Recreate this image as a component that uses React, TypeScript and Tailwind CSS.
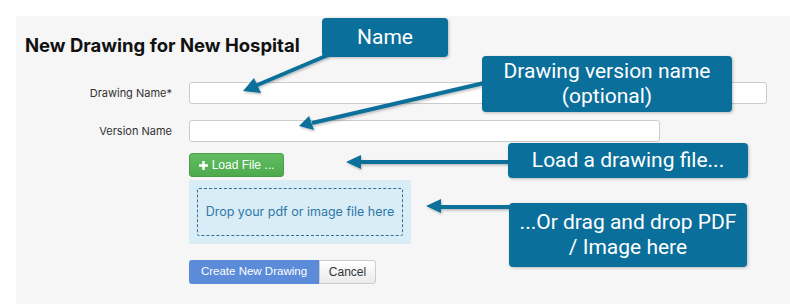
import React from "react";

const Callout = ({ className, children }: { className: string; children: React.ReactNode }) => (
  <div
    className={`absolute flex items-center justify-center rounded-[4px] bg-[#0b6f9b] text-center text-[21px] leading-[25px] text-white shadow-[1px_1px_3px_rgba(0,0,0,0.25)] ${className}`}
    style={{ fontFamily: "Roboto, 'Liberation Sans', sans-serif" }}
  >
    {children}
  </div>
);

export default function App() {
  return (
    <div
      className="relative h-[304px] w-[790px] overflow-hidden bg-white pl-4 pt-4"
      style={{ fontFamily: "Inter, 'Liberation Sans', sans-serif" }}
    >
      <div className="h-full bg-[#f6f6f6] pl-[9px] pt-[18px]">
        <h1 className="text-[18.5px] font-bold leading-[22px] text-[#111]">New Drawing for New Hospital</h1>

        <div className="mt-[26px] flex flex-col">
          <div className="flex items-center gap-[17px]">
            <label className="w-[147px] text-right text-[11px] text-[#333]">Drawing Name*</label>
            <input className="h-[22px] w-[578px] rounded-[3px] border border-[#ccc] bg-white" />
          </div>
          <div className="mt-[16px] flex items-center gap-[17px]">
            <label className="w-[147px] text-right text-[11px] text-[#333]">Version Name</label>
            <input className="h-[22px] w-[471px] rounded-[3px] border border-[#ccc] bg-white" />
          </div>

          <div className="ml-[164px] mt-[11px] flex flex-col items-start">
            <button
              className="flex h-[24px] w-[95px] items-center justify-center gap-[4px] rounded-[3px] border border-[#4a9e4a] bg-gradient-to-b from-[#62bd62] to-[#4caa4c] text-[12px] text-white"
              style={{ fontFamily: "'Liberation Sans', Arial, sans-serif" }}
            >
              <svg width="9" height="9" viewBox="0 0 9 9">
                <path d="M3.3 0h2.4v3.3H9v2.4H5.7V9H3.3V5.7H0V3.3h3.3z" fill="white" />
              </svg>
              Load File ...
            </button>

            <div className="mt-[3px] h-[64px] w-[222px] bg-[#d9edf7] p-[8px]">
              <div className="flex h-full w-full items-center justify-center rounded-[2px] border border-dashed border-[#2f6f99] text-[12.5px] text-[#2f78a8]">
                Drop your pdf or image file here
              </div>
            </div>

            <div className="mt-[16px] flex" style={{ fontFamily: "'Liberation Sans', Arial, sans-serif" }}>
              <button className="h-[24px] w-[130px] rounded-l-[3px] bg-[#5b8bd9] text-[11.5px] text-white">
                Create New Drawing
              </button>
              <button className="h-[24px] w-[57px] rounded-r-[3px] border border-[#ccc] bg-gradient-to-b from-white to-[#ebebeb] text-[12px] text-[#333]">
                Cancel
              </button>
            </div>
          </div>
        </div>
      </div>

      <svg className="pointer-events-none absolute left-0 top-0" width="790" height="304">
        <defs>
          <filter id="sh" x="-10%" y="-50%" width="120%" height="200%">
            <feDropShadow dx="1" dy="1.5" stdDeviation="1" floodColor="#000" floodOpacity="0.25" />
          </filter>
        </defs>
        <g fill="#0b6f9b" stroke="#0b6f9b" filter="url(#sh)">
          <line x1="328" y1="55" x2="255" y2="86" strokeWidth="4" />
          <polygon points="243,91 254,78 261,93" stroke="none" />
          <line x1="484" y1="83" x2="312" y2="123" strokeWidth="4" />
          <polygon points="299,126 309,116 314,130" stroke="none" />
          <line x1="510" y1="162" x2="360" y2="162" strokeWidth="4" />
          <polygon points="346,162 361,155 361,169" stroke="none" />
          <line x1="511" y1="207" x2="440" y2="207" strokeWidth="4" />
          <polygon points="426,206 441,199 441,213" stroke="none" />
        </g>
      </svg>

      <Callout className="left-[322px] top-[18px] h-[39px] w-[126px]">Name</Callout>
      <Callout className="left-[482px] top-[56px] h-[56px] w-[250px]">
        Drawing version name
        <br />
        (optional)
      </Callout>
      <Callout className="left-[508px] top-[143px] h-[35px] w-[240px]">Load a drawing file...</Callout>
      <Callout className="left-[509px] top-[203px] h-[64px] w-[238px]">
        ...Or drag and drop PDF
        <br />/ Image here
      </Callout>
    </div>
  );
}
